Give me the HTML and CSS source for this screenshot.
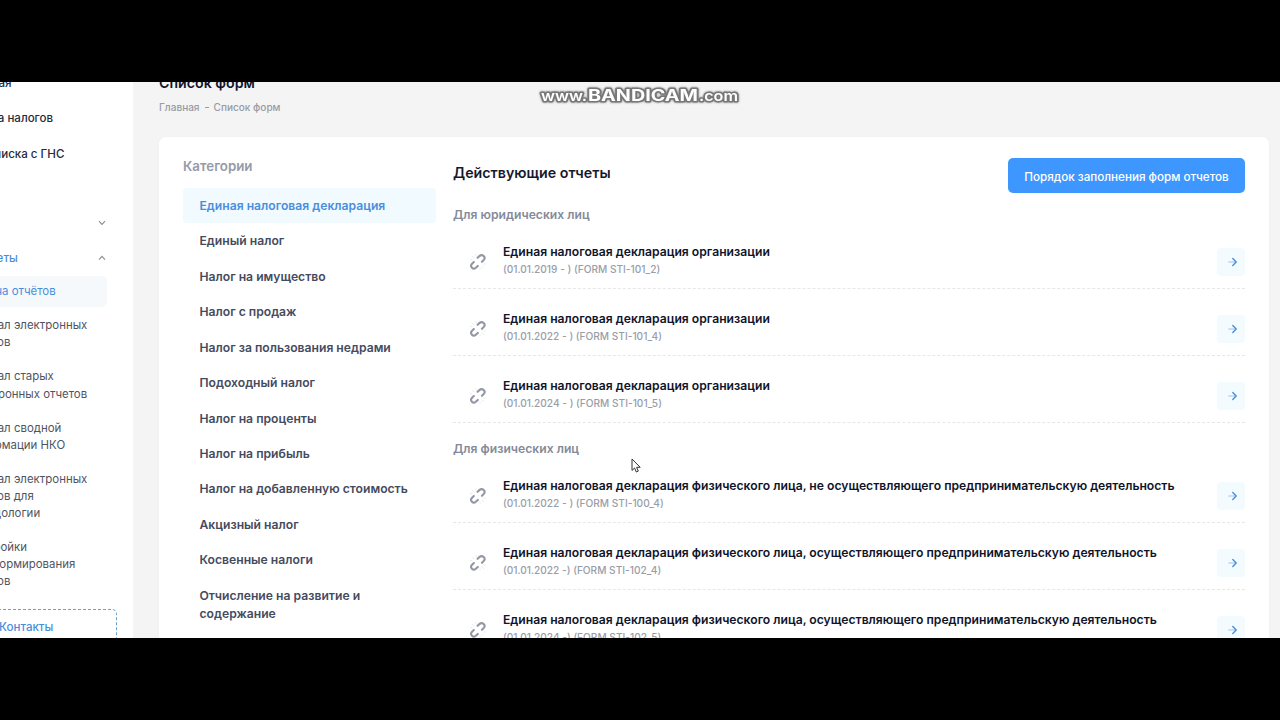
FILE: index.html
```html
<!doctype html>
<html lang="ru">
	<head>
		<meta charset="UTF-8" />
		<meta name="viewport" content="width=device-width, initial-scale=1.0" />
		<title>Список форм</title>
		<link rel="stylesheet" href="styles.css">
	</head>
	<body>
		<svg width="0" height="0" class="sprite" aria-hidden="true">
			<symbol id="link" viewBox="0 0 18 18">
				<g fill="none" stroke="#9297a3" stroke-width="2.1" stroke-linecap="round">
					<path d="M8.6 4.8 L10.6 2.9 C13.4 0.6 17.2 4.2 14.8 6.9 L13 8.8" />
					<path d="M4.8 9 L2.9 10.9 C0.5 13.6 4.1 17.2 6.8 14.8 L8.8 12.9" />
				</g>
				<path d="M3.2 3.2 L4.8 4.8 M7 1.5 V3.2 M1.5 6.5 H3 M13 13 L14.6 14.6 M11 14.8 V16.2 M14.8 11 H16.2" stroke="#e9ebee" stroke-linecap="round" />
			</symbol>
			<symbol id="arrow" viewBox="0 0 12 12">
				<path d="M1.8 6 H9" stroke="#9cc4ef" stroke-width="1.2" stroke-linecap="round" />
				<path d="M5.8 2.6 L9.2 6 L5.8 9.4" fill="none" stroke="#4a8edb" stroke-width="1.4" stroke-linecap="round" stroke-linejoin="round" />
			</symbol>
		</svg>

		<div class="screen">
			<aside class="sidebar">
				<nav>
					<a class="menu-link">Главная</a>
					<a class="menu-link">Уплата налогов</a>
					<a class="menu-link">Переписка с ГНС</a>
					<a class="menu-link toggle"><span></span><svg width="8" height="6" viewBox="0 0 8 6"><path d="M1 1.2 L4 4.4 L7 1.2" /></svg></a>
					<a class="menu-link toggle open"><span>Отчеты</span><svg width="8" height="6" viewBox="0 0 8 6"><path d="M1 4.6 L4 1.4 L7 4.6" /></svg></a>
				</nav>
				<nav class="submenu">
					<a class="active">Подача отчётов</a>
					<a>Журнал электронных<br>отчетов</a>
					<a>Журнал старых<br>электронных отчетов</a>
					<a>Журнал сводной<br>информации НКО</a>
					<a>Журнал электронных<br>отчетов для<br>методологии</a>
					<a>Настройки<br>автоформирования<br>отчетов</a>
				</nav>
				<a class="contacts">Контакты</a>
			</aside>

			<main class="main">
				<h1>Список форм</h1>
				<div class="breadcrumb"><span>Главная</span><i></i><span>Список форм</span></div>

				<div class="card">
					<section class="categories">
						<h2>Категории</h2>
						<a class="active">Единая налоговая декларация</a>
						<a>Единый налог</a>
						<a>Налог на имущество</a>
						<a>Налог с продаж</a>
						<a>Налог за пользования недрами</a>
						<a>Подоходный налог</a>
						<a>Налог на проценты</a>
						<a>Налог на прибыль</a>
						<a>Налог на добавленную стоимость</a>
						<a>Акцизный налог</a>
						<a>Косвенные налоги</a>
						<a>Отчисление на развитие и содержание</a>
					</section>

					<section class="reports">
						<header>
							<h2>Действующие отчеты</h2>
							<button>Порядок заполнения форм отчетов</button>
						</header>

						<h3>Для юридических лиц</h3>
						<div class="row">
							<svg class="link"><use href="#link" /></svg>
							<div class="info"><b>Единая налоговая декларация организации</b><span>(01.01.2019 - ) (FORM STI-101_2)</span></div>
							<a class="go"><svg><use href="#arrow" /></svg></a>
						</div>
						<div class="row">
							<svg class="link"><use href="#link" /></svg>
							<div class="info"><b>Единая налоговая декларация организации</b><span>(01.01.2022 - ) (FORM STI-101_4)</span></div>
							<a class="go"><svg><use href="#arrow" /></svg></a>
						</div>
						<div class="row">
							<svg class="link"><use href="#link" /></svg>
							<div class="info"><b>Единая налоговая декларация организации</b><span>(01.01.2024 - ) (FORM STI-101_5)</span></div>
							<a class="go"><svg><use href="#arrow" /></svg></a>
						</div>

						<h3>Для физических лиц</h3>
						<div class="row">
							<svg class="link"><use href="#link" /></svg>
							<div class="info"><b>Единая налоговая декларация физического лица, не осуществляющего предпринимательскую деятельность</b><span>(01.01.2022 - ) (FORM STI-100_4)</span></div>
							<a class="go"><svg><use href="#arrow" /></svg></a>
						</div>
						<div class="row">
							<svg class="link"><use href="#link" /></svg>
							<div class="info"><b>Единая налоговая декларация физического лица, осуществляющего предпринимательскую деятельность</b><span>(01.01.2022 -) (FORM STI-102_4)</span></div>
							<a class="go"><svg><use href="#arrow" /></svg></a>
						</div>
						<div class="row">
							<svg class="link"><use href="#link" /></svg>
							<div class="info"><b>Единая налоговая декларация физического лица, осуществляющего предпринимательскую деятельность</b><span>(01.01.2024 -) (FORM STI-102_5)</span></div>
							<a class="go"><svg><use href="#arrow" /></svg></a>
						</div>
					</section>
				</div>
			</main>

			<svg class="watermark" width="204" height="24" viewBox="0 0 204 24">
				<g class="glow">
					<text x="3" y="17.5" font-size="14" textLength="46" lengthAdjust="spacingAndGlyphs">www.</text>
					<text x="50" y="17.5" font-size="15.5" font-weight="700" textLength="110" lengthAdjust="spacingAndGlyphs">BANDICAM</text>
					<text x="161" y="17.5" font-size="14" textLength="39" lengthAdjust="spacingAndGlyphs">.com</text>
				</g>
			</svg>
			<svg class="cursor" width="11" height="17" viewBox="0 0 11 17">
				<path d="M1 1 V12.4 L3.6 10 L5.3 14 L7.3 13.1 L5.6 9.3 H9.2 Z" fill="#fff" stroke="#333" />
			</svg>
		</div>
	</body>
</html>
```
FILE: styles.css
```css
* {
	box-sizing: border-box;
}
body {
	margin: 0;
	padding: 82px 0;
	height: 720px;
	background: #000;
	font-family: Inter, sans-serif;
	overflow: hidden;
}
h1,
h2,
h3 {
	margin: 0;
	font-weight: 600;
}
.sprite {
	position: absolute;
}
.screen {
	position: relative;
	display: flex;
	height: 556px;
	background: #f4f4f4;
	overflow: hidden;
}

/* sidebar is scrolled partly out of the window on the left */
.sidebar {
	flex: none;
	width: 190px;
	margin-left: -57px;
	background: #fff;
	color: #50545f;
}
.sidebar nav {
	display: flex;
	flex-direction: column;
}
.sidebar nav:first-child {
	margin-top: -17px;
}
.menu-link {
	height: 35.4px;
	padding-left: 22px;
	font-size: 11.55px;
	line-height: 36.2px;
	font-weight: 500;
	color: #252a3c;
}
.menu-link.toggle {
	display: flex;
	align-items: center;
	justify-content: space-between;
	padding-right: 27px;
}
.menu-link.toggle:not(.open) {
	margin-top: 34px;
}
.toggle svg path {
	fill: none;
	stroke: #868b96;
	stroke-width: 1.1;
}
.menu-link.open {
	padding-left: 32.5px;
	color: #4a8edb;
}
.submenu a {
	padding: 9.3px 0 7.7px 23.5px;
	font-size: 11.45px;
	line-height: 17.1px;
}
.submenu .active {
	height: 31px;
	margin: 0 26px 1px 0;
	padding: 7.3px 0 0 23.5px;
	border-radius: 5px;
	background: #f5f9fb;
	color: #4a8edb;
}
.contacts {
	display: block;
	height: 36px;
	margin: 10.5px 16px 0 20px;
	padding-left: 35px;
	border: 1px dashed #68a2d0;
	border-radius: 5px;
	color: #4a8edb;
	font-size: 11.55px;
	line-height: 34px;
	font-weight: 500;
}

.main {
	flex: 1;
	padding: 0 11px 0 26px;
}
.main h1 {
	height: 18px;
	margin-top: -8px;
	font-size: 14.2px;
	line-height: 18px;
	color: #10142a;
}
.breadcrumb {
	display: flex;
	align-items: center;
	height: 14px;
	margin: 8px 0 23px;
	color: #999ba5;
	font-size: 10.05px;
	font-weight: 500;
}
.breadcrumb i {
	width: 4px;
	height: 1px;
	margin: 0 5px;
	background: #999ba5;
}
.card {
	display: flex;
	height: 600px;
	padding: 0 24px;
	border-radius: 7px;
	background: #fff;
	box-shadow: 0 0 5px rgba(0, 0, 0, 0.02);
}
.categories {
	display: flex;
	flex-direction: column;
	flex: none;
	width: 253px;
	margin-right: 17px;
}
.categories h2 {
	height: 51px;
	padding-top: 20px;
	font-size: 13.3px;
	line-height: 18px;
	color: #969aa7;
}
.categories a {
	padding: 8.87px 20px 8.87px 16.5px;
	border-radius: 4px;
	color: #454b5e;
	font-size: 12.16px;
	line-height: 17.74px;
	font-weight: 600;
}
.categories .active {
	background: #f1faff;
	color: #4a8edb;
}

.reports {
	flex: 1;
}
.reports header {
	display: flex;
	justify-content: space-between;
	height: 68px;
	padding-top: 21px;
}
.reports h2 {
	color: #15192e;
	font-size: 14.25px;
	line-height: 29px;
}
.reports button {
	width: 237px;
	height: 35px;
	padding: 2px 0 0;
	border: 0;
	border-radius: 5px;
	background: #3e97ff;
	color: #fff;
	font: 500 11.65px Inter, sans-serif;
}
.reports h3 {
	height: 17px;
	color: #858a99;
	font-size: 12.16px;
	line-height: 19px;
}
.row + h3 {
	margin-top: 16px;
}
.row {
	display: flex;
	align-items: center;
	height: 67px;
	padding-top: 14px;
	border-bottom: 1px dashed #e5e7ec;
}
.link {
	width: 18px;
	height: 18px;
	margin: 0 16px;
}
.info {
	flex: 1;
	padding-bottom: 5px;
}
.info b,
.info span {
	display: block;
	white-space: nowrap;
}
.info b {
	color: #10142a;
	font-size: 12.16px;
	line-height: 18px;
	font-weight: 600;
}
.info span {
	color: #999da8;
	font-size: 10.15px;
	line-height: 16px;
	font-weight: 500;
}
.go {
	display: flex;
	align-items: center;
	justify-content: center;
	width: 28px;
	height: 28px;
	border-radius: 4px;
	background: #f3fbff;
}
.go svg {
	width: 12px;
	height: 12px;
	margin-left: 4px;
}

.watermark {
	position: absolute;
	left: 538px;
	top: 1px;
}
.glow {
	fill: #fff;
	stroke: #777;
	stroke-width: 3px;
	stroke-linejoin: round;
	paint-order: stroke;
	font-family: Inter, sans-serif;
	font-weight: 600;
	filter: drop-shadow(0 0 1px #888);
}
.cursor {
	position: absolute;
	left: 630.5px;
	top: 376px;
}
```
